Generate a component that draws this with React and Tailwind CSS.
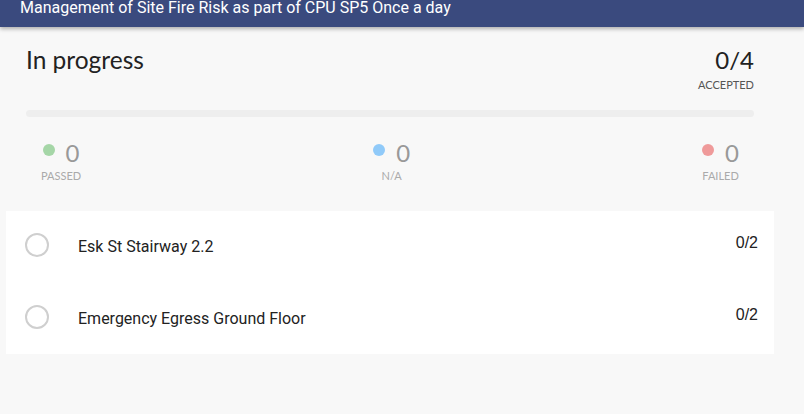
import React from 'react'

const stats = [
  { label: 'PASSED', value: 0, dot: 'bg-[#a5d6a7]' },
  { label: 'N/A', value: 0, dot: 'bg-[#90caf9]' },
  { label: 'FAILED', value: 0, dot: 'bg-[#ef9a9a]' },
]

const items = [
  { name: 'Esk St Stairway 2.2', count: '0/2' },
  { name: 'Emergency Egress Ground Floor', count: '0/2' },
]

function StatBlock({ stat }) {
  return (
    <div className="flex flex-col items-center">
      <div className="flex items-start gap-[11px]">
        <span className={`mt-[3px] h-[12px] w-[12px] rounded-full ${stat.dot}`} />
        <span className="text-[24px] leading-none text-[#999]">{stat.value}</span>
      </div>
      <span className="mt-[5px] text-[11px] leading-none text-[#aaa]">{stat.label}</span>
    </div>
  )
}

export default function App() {
  return (
    <div className="min-h-[414px] w-full overflow-hidden bg-[#f8f8f8] font-['Lato','Segoe_UI',sans-serif]">
      {/* Header */}
      <div className="relative z-10 h-[27px] bg-[#3a4a7e] pl-[20px] shadow-[0_2px_4px_rgba(0,0,0,0.3)]">
        <span className="block font-['Roboto',sans-serif] text-[16px] leading-[16px] text-white">
          Management of Site Fire Risk as part of CPU SP5 Once a day
        </span>
      </div>

      <div className="w-[780px]">
        {/* Summary */}
        <div className="px-[26px] pt-[21px]">
          <div className="flex items-start justify-between">
            <h1 className="text-[24.5px] leading-none text-[#222]">In progress</h1>
            <div className="flex flex-col items-end">
              <span className="text-[24px] leading-none text-[#222]">0/4</span>
              <span className="mt-[7px] text-[11px] leading-none text-[#555]">ACCEPTED</span>
            </div>
          </div>

          <div className="mt-[20px] h-[7px] rounded-full bg-[#eeeeee]" />

          <div className="mt-[24px] flex justify-between px-[15px]">
            {stats.map((s) => (
              <StatBlock key={s.label} stat={s} />
            ))}
          </div>
        </div>

        {/* Checklist */}
        <div className="mx-[6px] mt-[30px] bg-white font-['Roboto',sans-serif]">
          {items.map((item) => (
            <div key={item.name} className="flex h-[71.5px] items-start pl-[19px] pr-[16px] pt-[22px]">
              <span className="h-[24px] w-[24px] shrink-0 rounded-full border-2 border-[#cfcfcf]" />
              <span className="ml-[29px] mt-[2px] flex-1 text-[16px] leading-[24px] text-[#222]">{item.name}</span>
              <span className="-mt-[2px] font-['Liberation_Sans',Arial,sans-serif] text-[16px] leading-[24px] text-[#222]">
                {item.count}
              </span>
            </div>
          ))}
        </div>
      </div>
    </div>
  )
}
